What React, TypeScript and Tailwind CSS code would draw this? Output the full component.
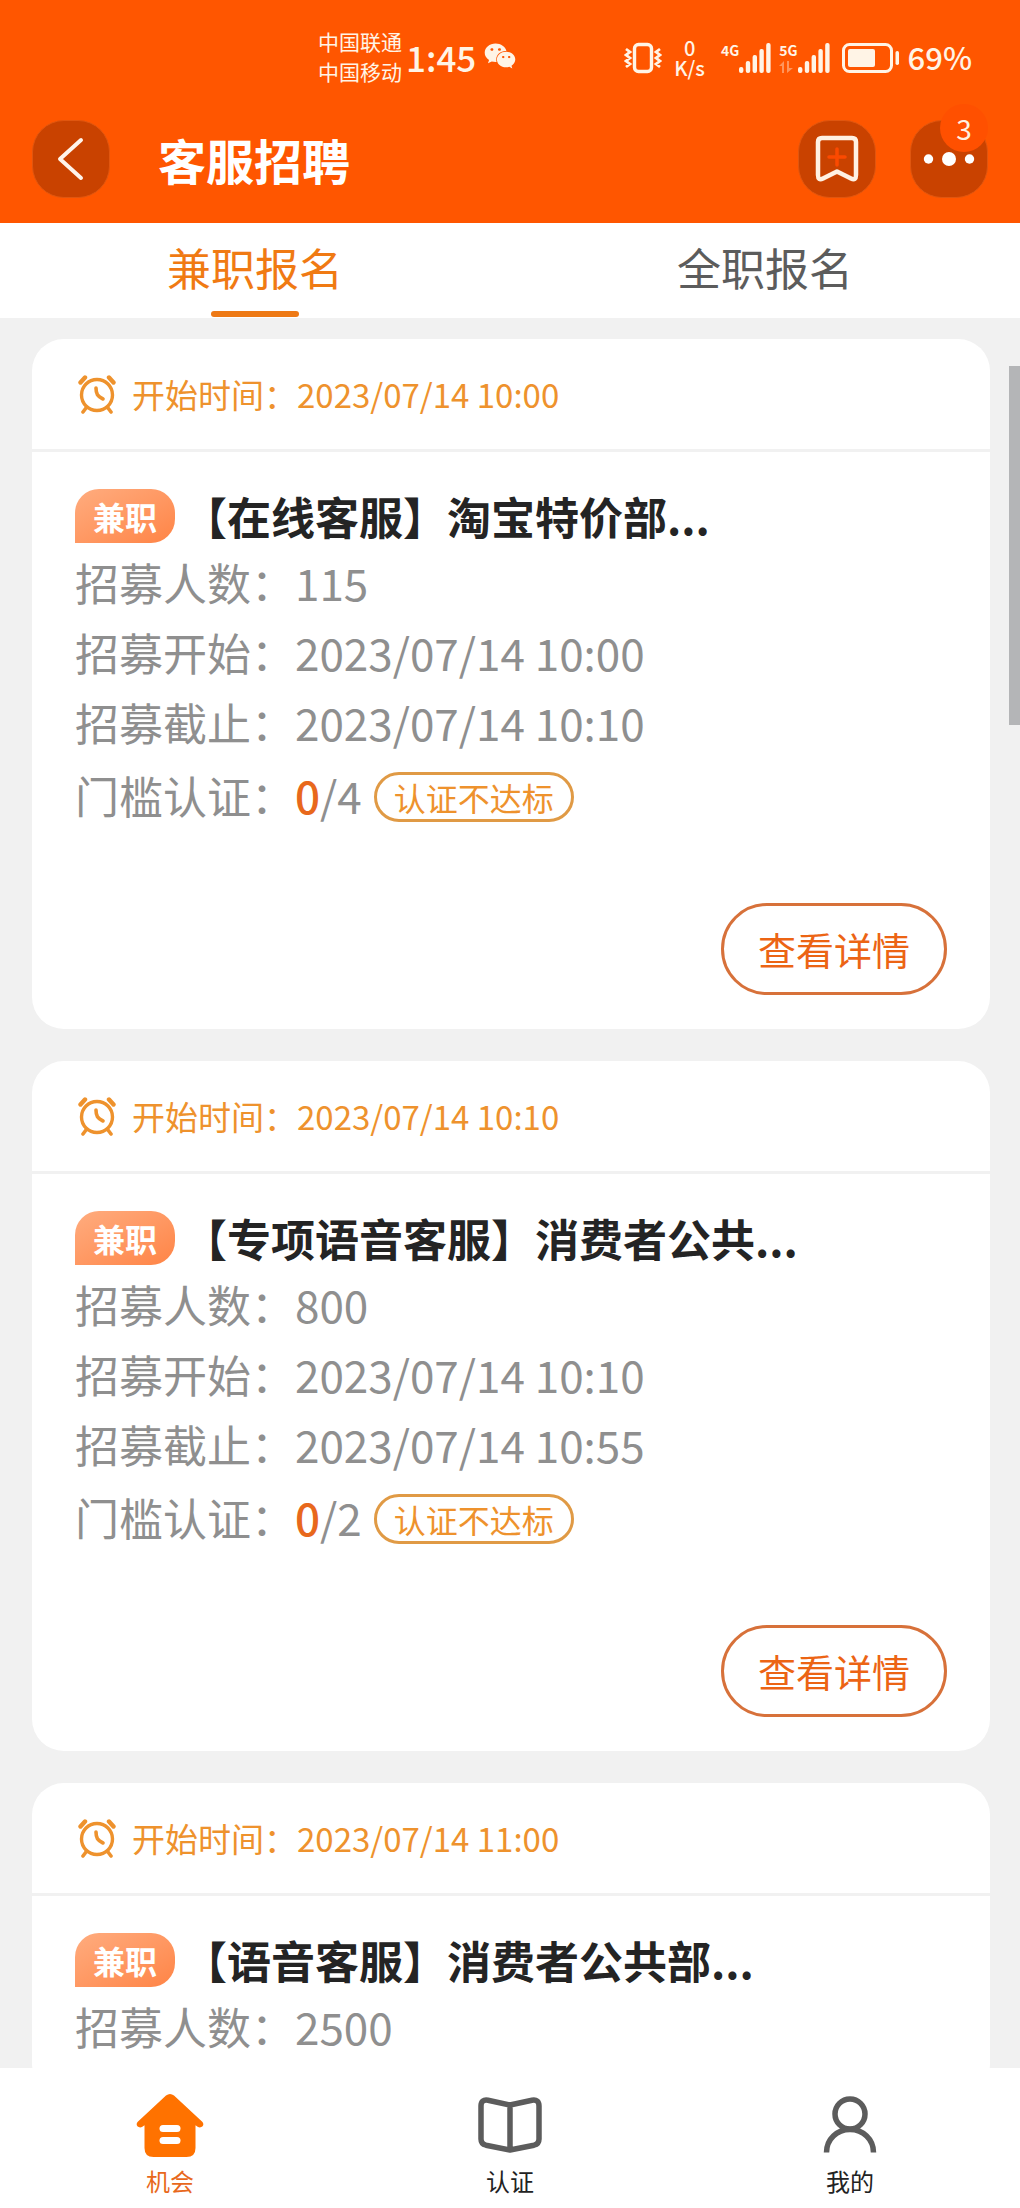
import { FaWeixin } from 'react-icons/fa';

type Job = {
  start: string;
  title: string;
  people: string;
  from?: string;
  to?: string;
  passed?: number;
  required?: number;
};

const JOBS: Job[] = [
  {
    start: '2023/07/14 10:00',
    title: '【在线客服】淘宝特价部...',
    people: '115',
    from: '2023/07/14 10:00',
    to: '2023/07/14 10:10',
    passed: 0,
    required: 4,
  },
  {
    start: '2023/07/14 10:10',
    title: '【专项语音客服】消费者公共...',
    people: '800',
    from: '2023/07/14 10:10',
    to: '2023/07/14 10:55',
    passed: 0,
    required: 2,
  },
  {
    start: '2023/07/14 11:00',
    title: '【语音客服】消费者公共部...',
    people: '2500',
  },
];

function VibrateIcon() {
  return (
    <svg width="38" height="32" viewBox="0 0 38 32" fill="none" stroke="currentColor" aria-hidden="true">
      <rect x="10.5" y="2.5" width="17" height="27" rx="4" strokeWidth="3.4" />
      <path d="M2 7l4 3-4 3 4 3-4 3 4 3-4 3M36 7l-4 3 4 3-4 3 4 3-4 3 4 3" strokeWidth="2.8" />
    </svg>
  );
}

function SignalIcon() {
  return (
    <svg width="32" height="30" viewBox="0 0 32 30" fill="currentColor" aria-hidden="true">
      <rect x="0" y="24" width="4.4" height="6" rx="2" />
      <rect x="6.8" y="18" width="4.4" height="12" rx="2" />
      <rect x="13.6" y="12" width="4.4" height="18" rx="2" />
      <rect x="20.4" y="6" width="4.4" height="24" rx="2" />
      <rect x="27.2" y="0" width="4.4" height="30" rx="2" />
    </svg>
  );
}

function DataIcon() {
  return (
    <svg width="14" height="12" viewBox="0 0 14 12" fill="currentColor" className="opacity-40" aria-hidden="true">
      <path d="M0 5L5 0v12H3V5zM8 0h2v7h4l-6 5z" />
    </svg>
  );
}

function BatteryIcon() {
  return (
    <svg width="58" height="30" viewBox="0 0 58 30" aria-hidden="true">
      <rect x="1.5" y="1.5" width="48" height="27" rx="6" fill="none" stroke="currentColor" strokeWidth="3" />
      <rect x="6" y="6" width="27" height="18" rx="2" fill="currentColor" />
      <rect x="53.5" y="8" width="3.5" height="14" rx="1.7" fill="currentColor" />
    </svg>
  );
}

function AlarmIcon() {
  return (
    <svg
      width="38"
      height="40"
      viewBox="0 0 38 40"
      fill="none"
      stroke="currentColor"
      strokeLinecap="round"
      aria-hidden="true"
    >
      <circle cx="19" cy="21" r="15.5" strokeWidth="3.4" />
      <path d="M2.500 8.500L7 3.500M35.500 8.500L31 3.500" strokeWidth="4.400" />
      <path d="M8 34L5 38M30 34L33 38" strokeWidth="3.600" />
      <path d="M18 14c0 6 1.500 8.500 7 11" strokeWidth="3.600" />
    </svg>
  );
}

function HomeIcon() {
  return (
    <svg width="68" height="66" viewBox="0 0 68 66" aria-hidden="true">
      <path
        d="M30 2.500q4-3.200 8 0L66.500 29c2.500 3.500-1 6.500-4.500 5l-2.500-1.800V55q0 9-9 9h-33q-9 0-9-9V32.200L6 34c-3.500 1.500-7-1.500-4.500-5z"
        fill="#ff7200"
      />
      <rect x="23.500" y="32" width="21" height="7" rx="3.500" fill="#fff" />
      <rect x="23.500" y="44" width="21" height="7" rx="3.500" fill="#fff" />
    </svg>
  );
}

function BookIcon() {
  return (
    <svg
      width="68"
      height="66"
      viewBox="0 0 68 66"
      fill="none"
      stroke="#5c5c5c"
      strokeWidth="5.500"
      strokeLinejoin="round"
      aria-hidden="true"
    >
      <path d="M34 12L12 7.200Q5 6 5 13v33q0 5 5 6.200L34 57l24-4.800q5-1.200 5-6.200V13q0-7-7-5.800zM34 12v45" />
    </svg>
  );
}

function UserIcon() {
  return (
    <svg width="68" height="66" viewBox="0 0 68 66" fill="none" stroke="#5c5c5c" strokeWidth="5.500" aria-hidden="true">
      <circle cx="34" cy="21" r="15" />
      <path d="M10.500 59.500c0-13.500 10.500-23 23.500-23s23.500 9.500 23.500 23" />
    </svg>
  );
}

const NAV = [
  { label: '机会', icon: <HomeIcon />, active: true },
  { label: '认证', icon: <BookIcon />, active: false },
  { label: '我的', icon: <UserIcon />, active: false },
];

function StatusBar() {
  return (
    <div className="flex h-[116px] items-center justify-between pr-12 pl-[318px] text-[#fff4e6]">
      <div className="flex items-center pb-1">
        <div className="text-[21px] leading-[30px]">
          <p>中国联通</p>
          <p>中国移动</p>
        </div>
        <span className="ml-1 text-[35px] leading-none font-medium">1:45</span>
        <FaWeixin className="ml-2 size-8" />
      </div>
      <div className="flex items-center">
        <VibrateIcon />
        <div className="ml-3 text-center text-[20px] leading-[20px] font-medium">
          <p>0</p>
          <p>K/s</p>
        </div>
        <div className="ml-4 flex">
          <span className="text-[14px] leading-none font-bold">4G</span>
          <SignalIcon />
        </div>
        <div className="ml-2 flex">
          <div className="flex flex-col justify-between">
            <span className="text-[14px] leading-none font-bold">5G</span>
            <DataIcon />
          </div>
          <SignalIcon />
        </div>
        <div className="ml-3">
          <BatteryIcon />
        </div>
        <span className="ml-2 pb-1 text-[31px] leading-none font-medium">69%</span>
      </div>
    </div>
  );
}

const ICON_BUTTON =
  'flex size-[78px] items-center justify-center rounded-[32px] border border-[#e0560f] bg-[#c94200]';

function TitleBar() {
  return (
    <div className="flex items-center px-8 pt-1 pb-[25px]">
      <button type="button" aria-label="返回" className={ICON_BUTTON}>
        <svg
          width="30"
          height="44"
          viewBox="0 0 30 44"
          fill="none"
          stroke="#fff4ea"
          strokeWidth="4"
          strokeLinecap="round"
          strokeLinejoin="round"
        >
          <path d="M25 3L4 22l21 19" />
        </svg>
      </button>
      <h1 className="ml-12 flex-1 text-[48px] leading-[72px] font-bold text-white">客服招聘</h1>
      <button type="button" aria-label="收藏" className={ICON_BUTTON}>
        <svg width="44" height="48" viewBox="0 0 44 48" fill="none" strokeLinecap="round" strokeLinejoin="round">
          <path
            d="M7 3h30q4 0 4 4v33q0 6-5 3.500L22 36.500 8 43.500Q3 46 3 40V7q0-4 4-4z"
            stroke="#fff1e2"
            strokeWidth="4.500"
          />
          <path d="M22 14v16M14 22h16" stroke="#fb4a00" strokeWidth="3.500" />
        </svg>
      </button>
      <div className="relative ml-[34px]">
        <button type="button" aria-label="更多" className={ICON_BUTTON}>
          <svg width="52" height="16" viewBox="0 0 52 16" fill="#fff">
            <circle cx="5.500" cy="8" r="4.700" />
            <circle cx="26" cy="8" r="7" />
            <circle cx="46.500" cy="8" r="4.700" />
          </svg>
        </button>
        <span className="absolute -top-4 right-0 flex size-12 items-center justify-center rounded-full bg-[#ff5000] text-[28px] leading-none text-[#fff1e0]">
          3
        </span>
      </div>
    </div>
  );
}

function Tabs() {
  return (
    <div role="tablist" className="flex bg-white text-[44px] leading-[88px]">
      <button
        type="button"
        role="tab"
        aria-selected="true"
        className="flex flex-1 flex-col items-center text-[#f07a13]"
      >
        兼职报名
        <span className="h-[6px] w-22 rounded-full bg-[#ee7915]" />
      </button>
      <button
        type="button"
        role="tab"
        aria-selected="false"
        className="flex flex-1 flex-col items-center pb-[7px] text-[#5c5c5c]"
      >
        全职报名
      </button>
    </div>
  );
}

function InfoRow({ label, value }: { label: string; value?: string }) {
  if (!value) return null;
  return (
    <div className="flex">
      <dt>{label}：</dt>
      <dd>{value}</dd>
    </div>
  );
}

function JobCard({ job }: { job: Job }) {
  return (
    <article className="shrink-0 rounded-[32px] bg-white">
      <div className="flex h-[113px] items-center border-b-3 border-[#f1f1f1] pl-[46px] text-[33px] text-[#ee922d]">
        <AlarmIcon />
        <p className="ml-4 leading-[48px]">开始时间：{job.start}</p>
      </div>
      <div className="px-[43px] pt-[37px] pb-[34px]">
        <div className="flex items-center">
          <span className="rounded-3xl rounded-bl-none bg-linear-to-br from-[#ffac7e] to-[#ff8445] px-[18px] text-[32px] leading-[54px] font-bold text-white">
            兼职
          </span>
          <h2 className="ml-2 text-[44px] leading-[54px] font-bold text-[#242424]">{job.title}</h2>
        </div>
        <dl className="mt-1 text-[44px] leading-[70px] text-[#8f8f8f]">
          <InfoRow label="招募人数" value={job.people} />
          <InfoRow label="招募开始" value={job.from} />
          <InfoRow label="招募截止" value={job.to} />
          {job.required && (
            <div className="flex h-[76px] items-center">
              <dt>门槛认证：</dt>
              <dd className="flex items-center">
                <span className="font-medium text-[#e8681c]">{job.passed}</span>/{job.required}
                <span className="mt-1 ml-3 rounded-full border-3 border-[#e09a45] px-[17px] text-[32px] leading-[44px] text-[#ee922d]">
                  认证不达标
                </span>
              </dd>
            </div>
          )}
        </dl>
        {job.required && (
          <div className="mt-[70px] flex justify-end">
            <button
              type="button"
              className="rounded-full border-3 border-[#d7713a] px-[34px] text-[38px] leading-[86px] text-[#ec6414]"
            >
              查看详情
            </button>
          </div>
        )}
      </div>
    </article>
  );
}

export default function App() {
  return (
    <div className="flex h-screen flex-col bg-[#f1f1f1] font-['Noto_Sans_CJK_SC',sans-serif]">
      <header className="bg-[#ff5600]">
        <StatusBar />
        <TitleBar />
      </header>
      <Tabs />
      <div className="relative min-h-0 flex-1">
        <main className="flex h-full flex-col gap-8 overflow-y-auto pt-[21px] pr-[30px] pl-8 [scrollbar-width:none]">
          {JOBS.map((job) => (
            <JobCard key={job.start} job={job} />
          ))}
        </main>
        <div className="absolute top-12 right-0 h-[359px] w-[11px] bg-[#b4b5b7]" />
      </div>
      <nav className="flex bg-white pt-[25px] pb-[6px]">
        {NAV.map((item) => (
          <a
            key={item.label}
            href="#"
            className="flex flex-1 flex-col items-center text-[24px] leading-[43px] text-[#222]"
          >
            {item.icon}
            <span className={item.active ? 'text-[#e8681c]' : ''}>{item.label}</span>
          </a>
        ))}
      </nav>
    </div>
  );
}
